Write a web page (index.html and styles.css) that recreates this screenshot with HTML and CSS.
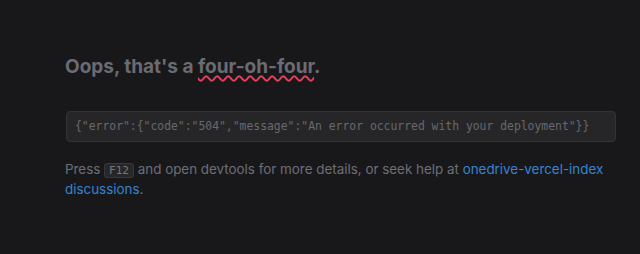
FILE: index.html
```html
<!DOCTYPE html>
<html>
<head>
<meta charset="utf-8">
<link rel="stylesheet" href="styles.css">
</head>
<body>
<main class="page">
  <h1 class="title">Oops, that's a <span class="wavy">four-oh-four</span>.</h1>
  <pre class="code">{"error":{"code":"504","message":"An error occurred with your deployment"}}</pre>
  <p class="help">Press <kbd class="key">F12</kbd> and open devtools for more details, or seek help at <a class="link" href="#">onedrive-vercel-index discussions</a>.</p>
</main>
</body>
</html>
```
FILE: styles.css
```css
html, body {
  margin: 0;
  padding: 0;
  background: #18181b;
}
body {
  font-family: Inter, "Noto Sans", sans-serif;
  color: #71717a;
}
.page {
  padding: 53px 24px 0 65px;
}
.title {
  margin: 0;
  font-size: 19px;
  line-height: 28px;
  font-weight: 700;
  color: #6b6b73;
}
.wavy {
  text-decoration: underline wavy #e5405e;
  text-decoration-thickness: 1.5px;
  text-underline-offset: 2px;
}
.code {
  margin: 30px 0 0 1px;
  width: 550px;
  box-sizing: border-box;
  padding: 8px 8px;
  background: #262628;
  border: 1px solid #333337;
  border-radius: 4px;
  font-family: "DejaVu Sans Mono", monospace;
  font-size: 11.4px;
  line-height: 13px;
  color: #68686e;
}
.help {
  margin: 17px 0 0;
  font-size: 13.4px;
  line-height: 20px;
  color: #6e6e75;
}
.key {
  font-family: "DejaVu Sans Mono", monospace;
  font-size: 11px;
  line-height: 12px;
  padding: 0 4px;
  border: 1px solid #38383c;
  background: #27272a;
  border-radius: 3px;
  color: #77777d;
}
.link {
  color: #3584cf;
  text-decoration: none;
}
```
